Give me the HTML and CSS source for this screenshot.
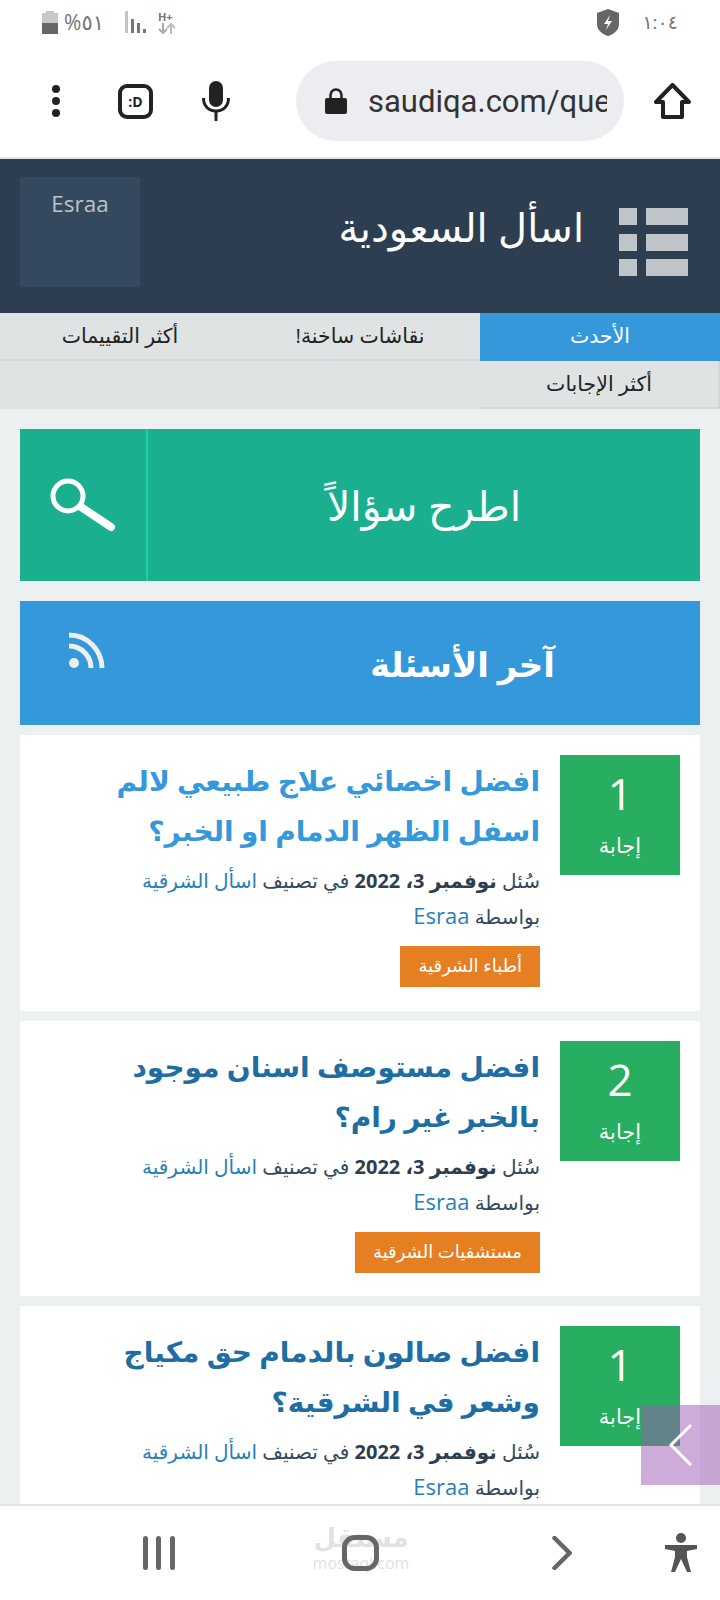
FILE: index.html
```html
<!DOCTYPE html>
<html lang="ar" dir="rtl">
<head>
  <meta charset="UTF-8">
  <title>اسأل السعودية</title>
  <link rel="stylesheet" href="styles.css">
</head>
<body>
  <div class="status-bar" dir="ltr">
    <div class="status-left">
      <svg class="battery" width="16" height="23" viewBox="0 0 16 23"><path d="M4 0h8v2h4v21H0V2h4z" fill="#c8c8c8"/><rect x="0" y="12" width="16" height="11" fill="#666"/></svg>
      <span class="status-pct">%٥١</span>
      <svg class="signal" width="22" height="22" viewBox="0 0 22 22"><rect x="0" y="0" width="3" height="22" fill="#c4c4c4"/><g fill="#777"><rect x="6" y="8" width="3" height="14"/><rect x="12" y="12" width="3" height="10"/><rect x="18" y="18" width="3" height="4"/></g></svg>
      <div class="net">
        <span>H+</span>
        <svg width="18" height="11" viewBox="0 0 18 11"><path d="M5 0v9M1 6l4 4 4-4" stroke="#aaa" stroke-width="2" fill="none"/><path d="M13 11V2M9 5l4-4 4 4" stroke="#bbb" stroke-width="2" fill="none"/></svg>
      </div>
    </div>
    <div class="status-right">
      <svg width="22" height="27" viewBox="0 0 22 27"><path d="M11 0l11 4v11c0 6-5 10-11 12C5 25 0 21 0 15V4z" fill="#666"/><path d="M13 6l-6 9h4l-2 6 6-9h-4z" fill="#fff"/></svg>
      <span class="status-time">١:٠٤</span>
    </div>
  </div>

  <div class="browser-bar" dir="ltr">
    <div class="dots"><i></i><i></i><i></i></div>
    <div class="face">:D</div>
    <svg class="mic" width="28" height="40" viewBox="0 0 28 40"><rect x="7" y="0" width="14" height="26" rx="7" fill="#222"/><path d="M1.500 17c0 8 5 13 12.500 13s12.500-5 12.500-13" stroke="#222" stroke-width="3" fill="none"/><rect x="12.500" y="29" width="3" height="11" fill="#222"/></svg>
    <div class="url">
      <svg width="22" height="26" viewBox="0 0 22 26"><path d="M5.500 11V7a5.500 5.500 0 0 1 11 0v4" stroke="#222" stroke-width="2.500" fill="none"/><rect x="0" y="10" width="22" height="16" rx="2" fill="#222"/></svg>
      <span class="url-text">saudiqa.com/que</span>
    </div>
    <svg class="home" width="37" height="36" viewBox="0 0 37 36"><path d="M18.500 2L2 19h7v15h19V19h7z" stroke="#222" stroke-width="4" fill="none" stroke-linejoin="round"/></svg>
  </div>

  <header class="site-header">
    <svg class="menu-icon" width="69" height="68" viewBox="0 0 69 68"><g fill="#bfc4c9"><rect x="0" y="0" width="18" height="17"/><rect x="27" y="0" width="42" height="17"/><rect x="0" y="26" width="18" height="17"/><rect x="27" y="26" width="42" height="17"/><rect x="0" y="51" width="18" height="17"/><rect x="27" y="51" width="42" height="17"/></g></svg>
    <div class="site-name">اسأل السعودية</div>
    <div class="user-box">Esraa</div>
  </header>

  <nav class="tabs">
    <div class="tab active">الأحدث</div>
    <div class="tab">نقاشات ساخنة!</div>
    <div class="tab">أكثر التقييمات</div>
    <div class="tab second">أكثر الإجابات</div>
  </nav>

  <main class="content">
    <div class="ask-btn">
      <div class="ask-text">اطرح سؤالاً</div>
      <div class="ask-icon">
        <svg width="66" height="54" viewBox="0 0 66 54"><circle cx="18" cy="18" r="15" stroke="#fff" stroke-width="5" fill="none"/><path d="M31 29l30 20" stroke="#fff" stroke-width="8" stroke-linecap="round"/></svg>
      </div>
    </div>

    <div class="section-title">
      <h2>آخر الأسئلة</h2>
      <svg class="rss" width="36" height="36" viewBox="0 0 36 36"><circle cx="5" cy="31" r="5" fill="#ecf0f1"/><path d="M0 14a22 22 0 0 1 22 22" stroke="#ecf0f1" stroke-width="5" fill="none"/><path d="M0 3a33 33 0 0 1 33 33" stroke="#ecf0f1" stroke-width="5" fill="none"/></svg>
    </div>

    <article class="card">
      <div class="count"><span class="num">1</span><span class="lbl">إجابة</span></div>
      <div class="card-body">
        <h3 class="q-title light">افضل اخصائي علاج طبيعي لالم اسفل الظهر الدمام او الخبر؟</h3>
        <p class="meta">سُئل <b>نوفمبر 3، 2022</b> في تصنيف <a>اسأل الشرقية</a> <span class="by">بواسطة <a class="user">Esraa</a></span></p>
        <span class="tag">أطباء الشرقية</span>
      </div>
    </article>

    <article class="card">
      <div class="count"><span class="num">2</span><span class="lbl">إجابة</span></div>
      <div class="card-body">
        <h3 class="q-title">افضل مستوصف اسنان موجود بالخبر غير رام؟</h3>
        <p class="meta">سُئل <b>نوفمبر 3، 2022</b> في تصنيف <a>اسأل الشرقية</a> <span class="by">بواسطة <a class="user">Esraa</a></span></p>
        <span class="tag">مستشفيات الشرقية</span>
      </div>
    </article>

    <article class="card">
      <div class="count"><span class="num">1</span><span class="lbl">إجابة</span></div>
      <div class="card-body">
        <h3 class="q-title">افضل صالون بالدمام حق مكياج وشعر في الشرقية؟</h3>
        <p class="meta">سُئل <b>نوفمبر 3، 2022</b> في تصنيف <a>اسأل الشرقية</a> <span class="by">بواسطة <a class="user">Esraa</a></span></p>
      </div>
    </article>
  </main>

  <div class="float-btn">
    <svg width="26" height="44" viewBox="0 0 26 44"><path d="M23 2L3 22l20 20" stroke="#fff" stroke-width="3" fill="none"/></svg>
  </div>

  <div class="bottom-nav" dir="ltr">
    <svg class="nav-recent" width="34" height="34" viewBox="0 0 34 34"><g fill="#666"><rect x="1" y="0" width="5" height="34" rx="2.500"/><rect x="14" y="0" width="5" height="34" rx="2.500"/><rect x="28" y="0" width="5" height="34" rx="2.500"/></g></svg>
    <div class="home-wrap">
      <div class="watermark"><span class="wm-ar">مستقل</span><span class="wm-en">mostaql.com</span></div>
      <svg class="home-btn" width="37" height="36" viewBox="0 0 37 36"><rect x="2.500" y="2.500" width="32" height="31" rx="10" stroke="#666" stroke-width="5" fill="none"/></svg>
    </div>
    <svg class="nav-next" width="20" height="34" viewBox="0 0 20 34"><path d="M2.500 2l15 15-15 15" stroke="#666" stroke-width="4.500" fill="none" stroke-linecap="round"/></svg>
    <svg class="nav-access" width="32" height="40" viewBox="0 0 32 40"><g fill="#555"><circle cx="16" cy="5" r="5"/><path d="M0 12h32v4l-10 2v6l4 15h-4l-6-13-6 13H6l4-15v-6L0 16z"/></g></svg>
  </div>
</body>
</html>
```

FILE: styles.css
```css
* {
  box-sizing: border-box;
}
html, body {
  margin: 0;
  padding: 0;
}
body {
  position: relative;
  width: 720px;
  height: 1600px;
  overflow: hidden;
  background: #ecf0f1;
  font-family: "Open Sans", "DejaVu Sans", sans-serif;
  color: #2c3e50;
}

/* phone chrome */
.status-bar {
  display: flex;
  justify-content: space-between;
  align-items: center;
  height: 50px;
  padding: 0 42px 6px 42px;
  background: #fff;
  color: #777;
}
.status-left,
.status-right {
  display: flex;
  align-items: center;
}
.status-pct {
  margin-left: 6px;
  font-size: 21px;
}
.signal {
  margin-left: 21px;
}
.net {
  display: flex;
  flex-direction: column;
  margin-left: 11px;
  font-size: 11px;
  font-weight: 700;
  line-height: 12px;
}
.status-time {
  margin-left: 23px;
  font-size: 19px;
}
.browser-bar {
  display: flex;
  align-items: center;
  height: 109px;
  padding: 0 0 5px 52px;
  background: #fff;
  border-bottom: 2px solid #e4e4e4;
}
.dots {
  display: flex;
  flex-direction: column;
  gap: 4px;
}
.dots i {
  width: 8px;
  height: 8px;
  border-radius: 50%;
  background: #222;
}
.face {
  display: flex;
  justify-content: center;
  align-items: center;
  width: 35px;
  height: 35px;
  margin-left: 58px;
  border: 4px solid #222;
  border-radius: 9px;
  font-size: 14px;
  font-weight: 700;
  color: #222;
}
.mic {
  margin-left: 49px;
}
.url {
  display: flex;
  align-items: center;
  width: 328px;
  height: 80px;
  margin-left: 66px;
  padding-left: 29px;
  border-radius: 40px;
  background: #ebedf0;
  overflow: hidden;
}
.url-text {
  width: 239px;
  margin-left: 21px;
  overflow: hidden;
  font-family: Roboto, sans-serif;
  font-size: 31px;
  white-space: nowrap;
  color: #333;
}
.home {
  margin-left: 30px;
}

/* site header */
.site-header {
  display: flex;
  align-items: center;
  height: 154px;
  padding: 0 32px 0 20px;
  background: #2c3e50;
}
.menu-icon {
  margin-top: 12px;
}
.site-name {
  margin-right: 35px;
  padding-bottom: 20px;
  font-size: 40px;
  color: #fff;
}
.user-box {
  align-self: flex-start;
  width: 120px;
  height: 110px;
  margin-top: 18px;
  margin-right: auto;
  padding-top: 11px;
  background: #34495e;
  text-align: center;
  font-size: 22.5px;
  color: #bdc3c7;
}

/* tabs */
.tabs {
  display: grid;
  grid-template-columns: repeat(3, 240px);
  background: #dfe3e4;
}
.tab {
  height: 48px;
  border-bottom: 2px solid #d0d9d9;
  line-height: 44px;
  text-align: center;
  font-size: 20.5px;
  color: #222;
}
.tab.active {
  border-bottom: 0;
  background: #3498db;
  color: #fff;
}
.tab.second {
  border-right: 2px solid #d0d9d9;
}

/* main column */
.content {
  padding: 20px 20px 0;
}
.ask-btn {
  display: flex;
  align-items: center;
  height: 152px;
  background: #1aaf8f;
  color: #fff;
}
.ask-text {
  flex: 1;
  text-align: center;
  font-size: 41px;
}
.ask-icon {
  display: flex;
  align-items: center;
  justify-content: center;
  width: 128px;
  height: 100%;
  border-right: 2px solid #1dd2a0;
}
.section-title {
  display: flex;
  justify-content: space-between;
  height: 124px;
  margin-top: 20px;
  padding: 0 145px 0 49px;
  background: #3498db;
  color: #fff;
}
.section-title h2 {
  margin: 0;
  padding-top: 40px;
  font-size: 34px;
  font-weight: 700;
}
.rss {
  margin-top: 31px;
}
.card {
  display: flex;
  align-items: flex-start;
  height: 275.5px;
  margin-top: 10px;
  padding: 20px;
  background: #fff;
}
.count {
  display: flex;
  flex-direction: column;
  align-items: center;
  flex: none;
  width: 120px;
  height: 120px;
  background: #27ae60;
  color: #fff;
}
.num {
  margin-top: 8px;
  font-size: 44px;
  line-height: 60px;
}
.lbl {
  margin-top: 8px;
  font-size: 21px;
}
.card-body {
  flex: 1;
  padding-right: 20px;
}
.q-title {
  margin: 0;
  padding-left: 40px;
  font-size: 28px;
  font-weight: 700;
  line-height: 50px;
  color: #1f6ea3;
}
.q-title.light {
  color: #3498db;
}
.meta {
  margin: 8px 0 0;
  font-size: 20px;
  line-height: 36px;
  color: #34495e;
}
.meta b {
  color: #2c3e50;
}
.meta a {
  color: #2980b9;
}
.by {
  white-space: nowrap;
}
.meta .user {
  font-size: 22px;
  line-height: 1;
}
.tag {
  display: inline-block;
  height: 41px;
  margin-top: 11px;
  padding: 0 18px;
  background: #e67e22;
  line-height: 38px;
  font-size: 18px;
  color: #fff;
}

/* overlays */
.float-btn {
  position: absolute;
  top: 1405px;
  left: 641px;
  display: flex;
  align-items: center;
  justify-content: center;
  width: 79px;
  height: 80px;
  background: rgba(155, 89, 182, 0.5);
}
.bottom-nav {
  position: absolute;
  top: 1504px;
  left: 0;
  display: flex;
  align-items: center;
  width: 720px;
  height: 96px;
  padding-left: 142px;
  border-top: 2px solid #e4e4e4;
  background: #fff;
}
.home-wrap {
  position: relative;
  width: 37px;
  height: 36px;
  margin-left: 166px;
}
.home-btn {
  position: relative;
  display: block;
}
.watermark {
  position: absolute;
  top: -13px;
  left: -25px;
  display: flex;
  flex-direction: column;
  align-items: center;
  width: 88px;
  color: #e2e2e2;
}
.wm-ar {
  font-size: 26px;
  font-weight: 700;
  line-height: 31px;
}
.wm-en {
  font-size: 16px;
  line-height: 21px;
}
.nav-next {
  margin-left: 173px;
}
.nav-access {
  margin-left: 93px;
}
```
